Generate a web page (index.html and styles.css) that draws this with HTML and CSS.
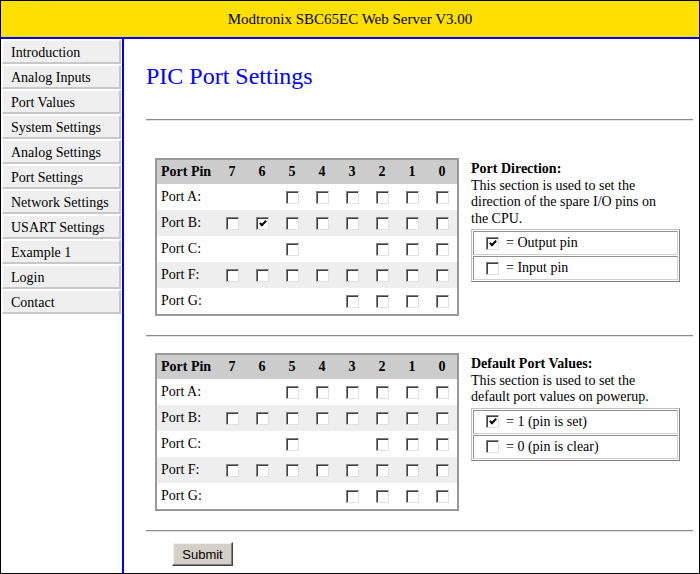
FILE: index.html
```html
<!DOCTYPE html>
<html>
<head>
<meta charset="utf-8">
<title>PIC Port Settings</title>
<link rel="stylesheet" href="styles.css">
</head>
<body>
<div class="page">
  <header class="header">Modtronix SBC65EC Web Server V3.00</header>
  <div class="body">
    <nav class="sidebar">
      <a class="menu-item" href="#">Introduction</a>
      <a class="menu-item" href="#">Analog Inputs</a>
      <a class="menu-item" href="#">Port Values</a>
      <a class="menu-item" href="#">System Settings</a>
      <a class="menu-item" href="#">Analog Settings</a>
      <a class="menu-item" href="#">Port Settings</a>
      <a class="menu-item" href="#">Network Settings</a>
      <a class="menu-item" href="#">USART Settings</a>
      <a class="menu-item" href="#">Example 1</a>
      <a class="menu-item" href="#">Login</a>
      <a class="menu-item" href="#">Contact</a>
    </nav>
    <main class="main">
      <h1 class="title">PIC Port Settings</h1>
      <hr class="rule">
      <section class="section first">
        <div class="ports">
          <div class="prow head"><span class="label">Port Pin</span><span>7</span><span>6</span><span>5</span><span>4</span><span>3</span><span>2</span><span>1</span><span>0</span></div>
          <div class="prow"><span class="label">Port A:</span><span></span><span></span><input class="cb" type="checkbox"><input class="cb" type="checkbox"><input class="cb" type="checkbox"><input class="cb" type="checkbox"><input class="cb" type="checkbox"><input class="cb" type="checkbox"></div>
          <div class="prow alt"><span class="label">Port B:</span><input class="cb" type="checkbox"><input class="cb" type="checkbox" checked><input class="cb" type="checkbox"><input class="cb" type="checkbox"><input class="cb" type="checkbox"><input class="cb" type="checkbox"><input class="cb" type="checkbox"><input class="cb" type="checkbox"></div>
          <div class="prow"><span class="label">Port C:</span><span></span><span></span><input class="cb" type="checkbox"><span></span><span></span><input class="cb" type="checkbox"><input class="cb" type="checkbox"><input class="cb" type="checkbox"></div>
          <div class="prow alt"><span class="label">Port F:</span><input class="cb" type="checkbox"><input class="cb" type="checkbox"><input class="cb" type="checkbox"><input class="cb" type="checkbox"><input class="cb" type="checkbox"><input class="cb" type="checkbox"><input class="cb" type="checkbox"><input class="cb" type="checkbox"></div>
          <div class="prow"><span class="label">Port G:</span><span></span><span></span><span></span><span></span><input class="cb" type="checkbox"><input class="cb" type="checkbox"><input class="cb" type="checkbox"><input class="cb" type="checkbox"></div>
        </div>
        <div class="info">
          <div class="info-title">Port Direction:</div>
          <div class="info-text">This section is used to set the direction of the spare I/O pins on the CPU.</div>
          <div class="legend">
            <div class="legend-cell"><input class="cb" type="checkbox" checked><span>= Output pin</span></div>
            <div class="legend-cell"><input class="cb" type="checkbox"><span>= Input pin</span></div>
          </div>
        </div>
      </section>
      <hr class="rule tight">
      <section class="section second">
        <div class="ports">
          <div class="prow head"><span class="label">Port Pin</span><span>7</span><span>6</span><span>5</span><span>4</span><span>3</span><span>2</span><span>1</span><span>0</span></div>
          <div class="prow"><span class="label">Port A:</span><span></span><span></span><input class="cb" type="checkbox"><input class="cb" type="checkbox"><input class="cb" type="checkbox"><input class="cb" type="checkbox"><input class="cb" type="checkbox"><input class="cb" type="checkbox"></div>
          <div class="prow alt"><span class="label">Port B:</span><input class="cb" type="checkbox"><input class="cb" type="checkbox"><input class="cb" type="checkbox"><input class="cb" type="checkbox"><input class="cb" type="checkbox"><input class="cb" type="checkbox"><input class="cb" type="checkbox"><input class="cb" type="checkbox"></div>
          <div class="prow"><span class="label">Port C:</span><span></span><span></span><input class="cb" type="checkbox"><span></span><span></span><input class="cb" type="checkbox"><input class="cb" type="checkbox"><input class="cb" type="checkbox"></div>
          <div class="prow alt"><span class="label">Port F:</span><input class="cb" type="checkbox"><input class="cb" type="checkbox"><input class="cb" type="checkbox"><input class="cb" type="checkbox"><input class="cb" type="checkbox"><input class="cb" type="checkbox"><input class="cb" type="checkbox"><input class="cb" type="checkbox"></div>
          <div class="prow"><span class="label">Port G:</span><span></span><span></span><span></span><span></span><input class="cb" type="checkbox"><input class="cb" type="checkbox"><input class="cb" type="checkbox"><input class="cb" type="checkbox"></div>
        </div>
        <div class="info">
          <div class="info-title">Default Port Values:</div>
          <div class="info-text">This section is used to set the default port values on powerup.</div>
          <div class="legend">
            <div class="legend-cell"><input class="cb" type="checkbox" checked><span>= 1 (pin is set)</span></div>
            <div class="legend-cell"><input class="cb" type="checkbox"><span>= 0 (pin is clear)</span></div>
          </div>
        </div>
      </section>
      <hr class="rule tight">
      <div class="actions"><button class="submit" type="button">Submit</button></div>
    </main>
  </div>
</div>
</body>
</html>
```
FILE: styles.css
```css
html, body {
  margin: 0;
  padding: 0;
  background: #fff;
}
body {
  font-family: "Liberation Serif", "Times New Roman", serif;
  font-size: 14px;
  color: #000;
}
.page {
  width: 700px;
  height: 574px;
  box-sizing: border-box;
  border: 1px solid #000;
  display: flex;
  flex-direction: column;
  overflow: hidden;
}
.header {
  flex: none;
  height: 36px;
  background: #ffe000;
  border-bottom: 2px solid #0000ff;
  display: flex;
  align-items: center;
  justify-content: center;
  font-size: 15px;
}
.body {
  flex: 1;
  display: flex;
  min-height: 0;
}
.sidebar {
  flex: none;
  width: 123px;
  box-sizing: border-box;
  border-right: 2px solid #0000ff;
  padding: 1px 0 0 1px;
  display: flex;
  flex-direction: column;
  gap: 1px;
}
.menu-item {
  display: block;
  width: 119px;
  height: 24px;
  box-sizing: border-box;
  border-style: solid;
  border-width: 1px 2px 2px 1px;
  border-color: #fff #c8c8c8 #c8c8c8 #fff;
  background: #efefef;
  padding: 1px 0 0 8px;
  line-height: 21px;
  color: #000;
  text-decoration: none;
  white-space: nowrap;
}
.main {
  flex: 1;
  padding: 0 6px 0 22px;
  min-width: 0;
}
.title {
  margin: 23px 0 0;
  font-size: 24px;
  line-height: 28px;
  font-weight: normal;
  color: #0000ff;
}
.rule {
  margin: 29px 0 0;
  height: 0;
  border: 0;
  border-top: 1px solid #8c8c8c;
  border-bottom: 1px solid #e2e2e2;
}
.rule.tight {
  margin-top: 0;
}
.section {
  display: flex;
  align-items: flex-start;
  gap: 12px;
  padding-left: 9px;
  margin-bottom: 19px;
}
.section.first {
  margin-top: 37px;
}
.section.second {
  margin-top: 16px;
}
.ports {
  flex: none;
  width: 304px;
  box-sizing: border-box;
  border: 2px solid #999;
}
.prow {
  display: grid;
  grid-template-columns: 60px repeat(8, 30px);
  height: 26px;
  align-items: center;
  justify-items: center;
}
.prow.head {
  height: 24px;
  background: #cccccc;
  font-weight: bold;
}
.prow.alt {
  background: #eeeeee;
}
.prow .label {
  justify-self: start;
  padding-left: 4px;
  white-space: nowrap;
}
.info {
  width: 209px;
  padding-top: 3px;
  line-height: 16.5px;
}
.info-title {
  font-weight: bold;
}
.info-text {
  max-width: 200px;
}
.legend {
  margin-top: 2px;
  border: 1px solid #a0a0a0;
  border-color: #c0c0c0 #808080 #808080 #c0c0c0;
  padding: 1px;
  display: flex;
  flex-direction: column;
  gap: 1px;
  line-height: normal;
}
.legend-cell {
  height: 24px;
  box-sizing: border-box;
  border: 1px solid #b4b4b4;
  border-color: #909090 #d0d0d0 #d0d0d0 #909090;
  display: flex;
  align-items: center;
  gap: 7px;
  padding-left: 12px;
}
.cb {
  -webkit-appearance: none;
  appearance: none;
  position: relative;
  width: 13px;
  height: 13px;
  margin: 0;
  box-sizing: border-box;
  border: 1px solid;
  border-color: #808080 #e0e0e0 #e0e0e0 #808080;
  box-shadow: inset 1px 1px 0 #404040;
  background: #fff;
}
.cb:checked::after {
  content: "";
  position: absolute;
  left: 4px;
  top: 1px;
  width: 2px;
  height: 5px;
  border: solid #000;
  border-width: 0 2px 2px 0;
  transform: rotate(45deg);
}
.actions {
  padding: 10px 0 0 26px;
}
.submit {
  width: 61px;
  height: 24px;
  margin: 0;
  padding: 0;
  font-family: "Liberation Sans", Arial, sans-serif;
  font-size: 13px;
  color: #000;
  background: #d4d0c8;
  border: 1px solid;
  border-color: #fff #404040 #404040 #fff;
  box-shadow: inset -1px -1px 0 #808080, inset 1px 1px 0 #f0f0f0;
}
```
